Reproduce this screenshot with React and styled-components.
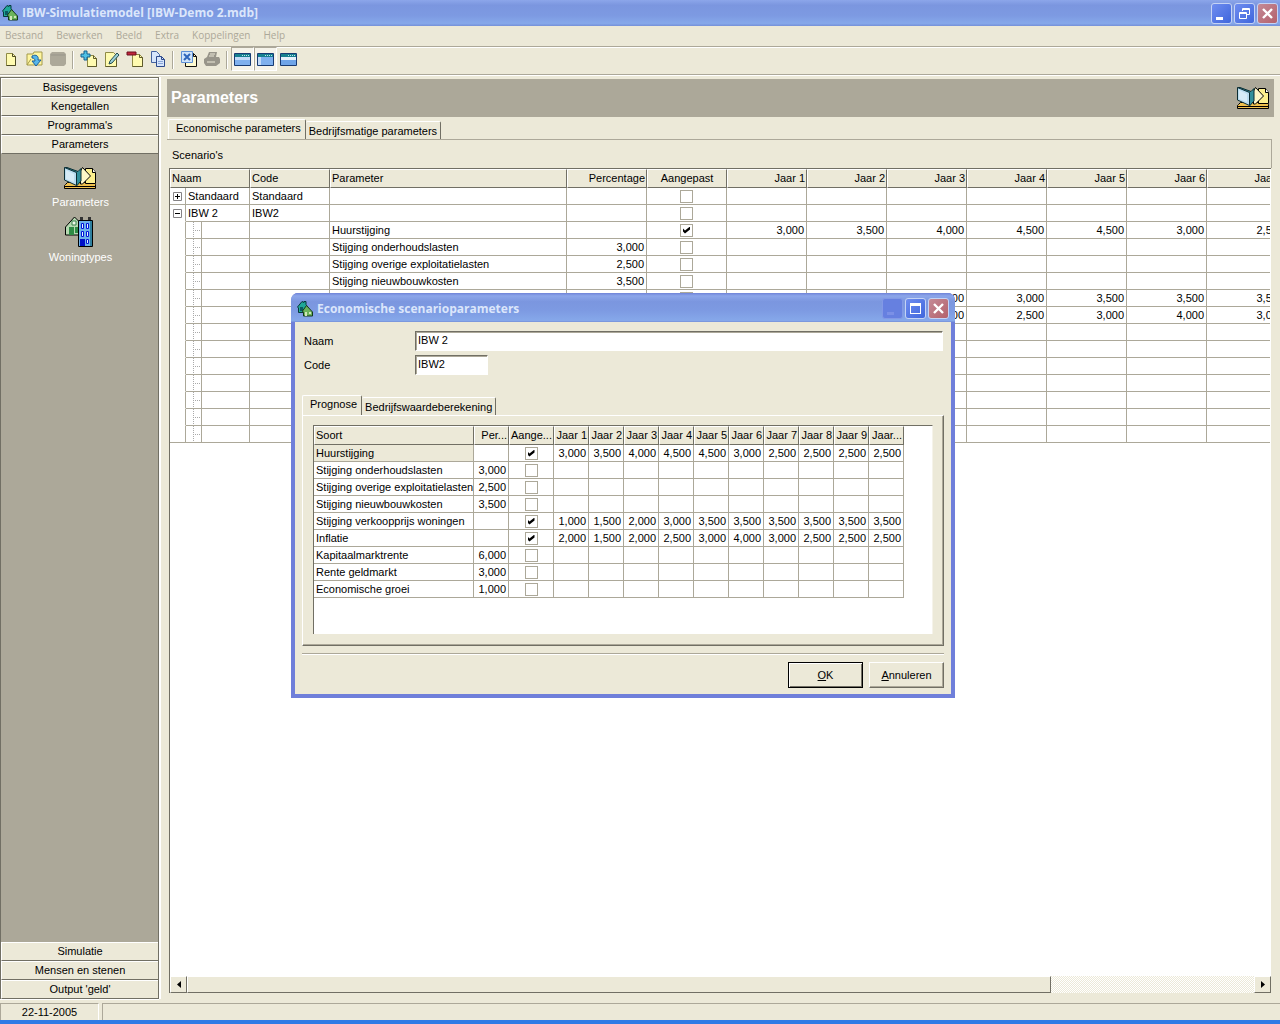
import React from 'react';
import styled, { createGlobalStyle, css } from 'styled-components';

const face = '#ece9d8';
const shade = '#aca899';
const dark = '#716f64';

const YEARS = [1, 2, 3, 4, 5, 6, 7, 8, 9];

const PARAMETERS = [
  { name: 'Huurstijging', years: ['3,000', '3,500', '4,000', '4,500', '4,500', '3,000', '2,500', '2,500', '2,500', '2,500'] },
  { name: 'Stijging onderhoudslasten', percentage: '3,000' },
  { name: 'Stijging overige exploitatielasten', percentage: '2,500' },
  { name: 'Stijging nieuwbouwkosten', percentage: '3,500' },
  { name: 'Stijging verkoopprijs woningen', years: ['1,000', '1,500', '2,000', '3,000', '3,500', '3,500', '3,500', '3,500', '3,500', '3,500'] },
  { name: 'Inflatie', years: ['2,000', '1,500', '2,000', '2,500', '3,000', '4,000', '3,000', '2,500', '2,500', '2,500'] },
  { name: 'Kapitaalmarktrente', percentage: '6,000' },
  { name: 'Rente geldmarkt', percentage: '3,000' },
  { name: 'Economische groei', percentage: '1,000' },
];

const EMPTY_ROWS = [1, 2, 3, 4];

/* Icons */

const HouseIcon = () => (
  <svg width="16" height="16" viewBox="0 0 16 16" aria-hidden="true">
    <path d="M.5 6L5 .5l2 1V.500h2v3l2 3v5H1.500V7z" fill="#1fa898" stroke="#06383a" />
    <path d="M3 6h3v4H3z" fill="#0b5a62" />
    <path d="M5.500 10l4-5.500 6 6.500v4h-9v-3z" fill="#6cb45c" stroke="#14381c" />
    <path d="M8 11h2v4H8zM12 11h2v2h-2z" fill="#cfe6b8" />
  </svg>
);

const BooksIcon = () => (
  <svg width="33" height="24" viewBox="0 0 33 24" aria-hidden="true">
    <path d="M1.500 18.500l2-2h26l2 2v4h-31v-3z" fill="#f0c04e" stroke="#000" />
    <path d="M1 20.500h31" stroke="#000" />
    <path d="M21.500 2.500h7l3 4v11h-10z" fill="#fdf08e" stroke="#000" />
    <path d="M28.500 2.500v4h3" fill="#fff" stroke="#000" />
    <path d="M18.500 1.500l8 8.500-8 8h-2V5z" fill="#fdf7c8" stroke="#000" />
    <path d="M1 1.500h2l11 4 3-3V15l-4 4.500z" fill="#32909c" stroke="#0b2d33" />
    <path d="M.5 1.500l12 5v13L.5 14z" fill="#b9dcef" stroke="#0b2d33" />
    <path d="M2 4l8 4v8l-8-3z" fill="#d6ebf6" />
  </svg>
);

const BuildingsIcon = () => (
  <svg width="32" height="34" viewBox="0 0 32 34" aria-hidden="true">
    <path d="M1.500 12L10.500 2l9 9v9h-18z" fill="#b5d9b1" stroke="#000" />
    <path d="M8 6h4v4H8z" fill="#eff8ea" stroke="#37804a" />
    <path d="M5 12h5v8H5zM11 12h3v6h-3z" fill="#2e8b45" />
    <path d="M16 2h3v3h-3zM24 2h3v3h-3z" fill="#333" />
    <path d="M14.500 5.500h14v26h-14z" fill="#6cb0ea" stroke="#000" />
    <path d="M26 6h2v25h-2z" fill="#2f7f9e" />
    <path d="M17.500 8.500h2v5h-2zM22.500 8.500h2v5h-2zM17.500 16.500h2v5h-2zM22.500 16.500h2v5h-2zM22.500 24.500h2v4h-2z" fill="#e9f4ff" stroke="#0014d8" />
    <path d="M16 24h5v7h-5z" fill="#0010c8" />
  </svg>
);

const NewIcon = () => (
  <svg width="16" height="16" viewBox="0 0 16 16" aria-hidden="true">
    <path d="M2.500 2.500h6l3 3v9h-9z" fill="#fffbb0" stroke="#8f8a45" />
    <path d="M8.500 2.500v3h3v9h-9" fill="none" stroke="#4d4a25" />
  </svg>
);

const OpenIcon = () => (
  <svg width="18" height="16" viewBox="0 0 18 16" aria-hidden="true">
    <path d="M1 3h6l1-2h8v13H1z" fill="#fff6a0" stroke="#a49a4a" />
    <path d="M6 5c4-2 7 0 6 4h3l-5 6-4-5h3c0-2-1-3-3-3z" fill="#58b7ea" stroke="#1a5f9e" />
    <path d="M1 14l4-6" stroke="#a49a4a" />
  </svg>
);

const DatabaseIcon = () => (
  <svg width="18" height="16" viewBox="0 0 18 16" aria-hidden="true">
    <path d="M1 3l2-2h12l2 2v10l-2 2H3l-2-2z" fill={shade} />
    <path d="M2 4h14" stroke="#98958a" />
  </svg>
);

const AddIcon = () => (
  <svg width="18" height="18" viewBox="0 0 18 18" aria-hidden="true">
    <path d="M7.500 5.500h6l3 3v8h-9z" fill="#fffbb0" stroke="#8f8a45" />
    <path d="M13.500 5.500v3h3v8h-9" fill="none" stroke="#5e5a2b" />
    <path d="M4 1h3v3h3v3H7v3H4V7H1V4h3z" fill="#4fc1e4" stroke="#14608f" />
  </svg>
);

const EditIcon = () => (
  <svg width="18" height="18" viewBox="0 0 18 18" aria-hidden="true">
    <path d="M2.500 2.500h8l3 3v11h-11z" fill="#fffbb0" stroke="#8f8a45" />
    <path d="M13.500 9v7.500h-11" fill="none" stroke="#5e5a2b" />
    <path d="M14 3l2 2-7 8-3 1 1-3z" fill="#9dd0d6" stroke="#214a50" />
  </svg>
);

const RemoveIcon = () => (
  <svg width="18" height="18" viewBox="0 0 18 18" aria-hidden="true">
    <path d="M6.500 4.500h7l3 3v9h-10z" fill="#fffbb0" stroke="#8f8a45" />
    <path d="M13.500 4.500v3h3v9h-10" fill="none" stroke="#5e5a2b" />
    <path d="M1 2h9v3H1z" fill="#c2263a" stroke="#6b1020" />
  </svg>
);

const CopyIcon = () => (
  <svg width="18" height="18" viewBox="0 0 18 18" aria-hidden="true">
    <path d="M2.500 1.500h5l3 3v8h-8z" fill="#d6e5fb" stroke="#44629f" />
    <path d="M7.500 6.500h5l3 3v7h-8z" fill="#d6e5fb" stroke="#2d4a8c" />
    <path d="M12.500 6.500v3h3" fill="none" stroke="#2d4a8c" />
    <path d="M9 11.500h5M9 13.500h5" stroke="#8ba7da" />
  </svg>
);

const ExcelIcon = () => (
  <svg width="18" height="18" viewBox="0 0 18 18" aria-hidden="true">
    <path d="M5.500 3.500h8l3 3v10h-11z" fill="#fffbd0" stroke="#111" />
    <path d="M13.500 3.500v3h3" fill="none" stroke="#111" />
    <path d="M1.500 1.500h11v11h-11z" fill="#cfe4fb" stroke="#5c8fd6" />
    <path d="M4 4l6 6M10 4l-6 6" stroke="#2f66bb" strokeWidth="2" />
  </svg>
);

const PrintIcon = () => (
  <svg width="18" height="16" viewBox="0 0 18 16" aria-hidden="true">
    <path d="M6 1h8l-1 5h3l1 2v4l-4 3H3l-2-3V8l3-2z" fill="#98958a" />
    <path d="M7 3h5M6 5h5M4 11h8" stroke={face} />
  </svg>
);

const WindowIcon = ({ left, top }) => (
  <svg width="17" height="15" viewBox="0 0 17 15" aria-hidden="true">
    <path d="M.5 1.500h16v12H.5z" fill={top ? '#e6f0fb' : '#7fb0ee'} stroke="#173a73" />
    <path d="M1 2h15v3H1z" fill="#16808f" />
    <path d="M8 3.500h1M10 3.500h1M12 3.500h1M14 3.500h1" stroke="#bfe6ea" />
    {!left && !top && <path d="M1 5h15v3H1z" fill="#c4dbf8" />}
    {left && <path d="M1 5h3v8H1z" fill="#c4dbf8" />}
    {top && <path d="M1 8h15v5H1z" fill="#6ea4e8" />}
  </svg>
);

const CaptionGlyph = ({ kind }) => (
  <svg width="19" height="19" viewBox="0 0 19 19" aria-hidden="true">
    {kind === 'minimize' && <path d="M4 13h7v3H4z" fill="currentColor" />}
    {kind === 'maximize' && <path d="M4 4h11v11H4zM5 7v7h9V7z" fill="currentColor" fillRule="evenodd" />}
    {kind === 'restore' && (
      <g fill="none" stroke="currentColor">
        <path d="M7.500 7V4.500h7v6H12M7 5.500h8" />
        <path d="M4.500 8.500h7v6h-7zM4 9.500h8" />
      </g>
    )}
    {kind === 'close' && <path d="M5 5l9 9M14 5l-9 9" stroke="currentColor" strokeWidth="2.400" />}
  </svg>
);

const ExpandGlyph = ({ open }) => (
  <svg width="9" height="9" viewBox="0 0 9 9" aria-hidden="true">
    <path d="M.5.5h8v8h-8z" fill="#fff" stroke="#848284" />
    <path d={open ? 'M2 4.500h5' : 'M2 4.500h5M4.500 2v5'} stroke="#000" />
  </svg>
);

const Arrow = ({ right }) => (
  <svg width="4" height="7" viewBox="0 0 4 7" aria-hidden="true">
    <path d={right ? 'M0 0v7l4-3.500z' : 'M4 0v7L0 3.500z'} fill="#000" />
  </svg>
);

const Caption = ({ kind, label, muted }) => (
  <CaptionButton type="button" aria-label={label} $close={kind === 'close'} $muted={muted}>
    <CaptionGlyph kind={kind} />
  </CaptionButton>
);

const Tool = ({ label, pressed, children }) => (
  <ToolButton type="button" aria-label={label} $pressed={pressed}>
    {children}
  </ToolButton>
);

const ScenarioGrid = () => (
  <Grid $width={957}>
    <colgroup>
      <Column $width={16} />
      <Column $width={16} />
      <Column $width={48} />
      <Column $width={80} />
      <Column $width={237} />
      <Column $width={80} />
      <Column $width={80} />
      {YEARS.slice(0, 7).map((year) => (
        <Column key={year} $width={80} />
      ))}
    </colgroup>
    <thead>
      <tr>
        <HeadCell colSpan={3}>Naam</HeadCell>
        <HeadCell>Code</HeadCell>
        <HeadCell>Parameter</HeadCell>
        <HeadCell $align="right">Percentage</HeadCell>
        <HeadCell $align="center">Aangepast</HeadCell>
        {YEARS.slice(0, 7).map((year) => (
          <HeadCell key={year} $align="right">{`Jaar ${year}`}</HeadCell>
        ))}
      </tr>
    </thead>
    <tbody>
      <tr>
        <TreeCell>
          <Expander type="button" aria-label="Standaard uitklappen"><ExpandGlyph /></Expander>
        </TreeCell>
        <Cell colSpan={2}>Standaard</Cell>
        <Cell>Standaard</Cell>
        <Cell />
        <Cell />
        <Cell $align="center"><Check type="checkbox" aria-label="Standaard aangepast" /></Cell>
        {YEARS.slice(0, 7).map((year) => <Cell key={year} />)}
      </tr>
      <tr>
        <TreeCell $open>
          <Expander type="button" aria-label="IBW 2 inklappen"><ExpandGlyph open /></Expander>
        </TreeCell>
        <Cell colSpan={2}>IBW 2</Cell>
        <Cell>IBW2</Cell>
        <Cell />
        <Cell />
        <Cell $align="center"><Check type="checkbox" aria-label="IBW 2 aangepast" /></Cell>
        {YEARS.slice(0, 7).map((year) => <Cell key={year} />)}
      </tr>
      {PARAMETERS.map((item) => (
        <tr key={item.name}>
          <TreeCell $open />
          <Cell $branch />
          <Cell />
          <Cell />
          <Cell>{item.name}</Cell>
          <Cell $align="right">{item.percentage}</Cell>
          <Cell $align="center">
            <Check type="checkbox" aria-label={`${item.name} aangepast`} defaultChecked={!!item.years} />
          </Cell>
          {YEARS.slice(0, 7).map((year) => (
            <Cell key={year} $align="right">{item.years && item.years[year - 1]}</Cell>
          ))}
        </tr>
      ))}
      {EMPTY_ROWS.map((row) => (
        <tr key={row}>
          <TreeCell $open={row < EMPTY_ROWS.length} />
          <Cell $branch />
          <Cell />
          <Cell />
          <Cell />
          <Cell />
          <Cell />
          {YEARS.slice(0, 7).map((year) => <Cell key={year} />)}
        </tr>
      ))}
    </tbody>
  </Grid>
);

const PrognoseGrid = () => (
  <Grid $width={590}>
    <colgroup>
      <Column $width={160} />
      <Column $width={35} />
      <Column $width={45} />
      {[...YEARS, 10].map((year) => (
        <Column key={year} $width={35} />
      ))}
    </colgroup>
    <thead>
      <tr>
        <HeadCell>Soort</HeadCell>
        <HeadCell $align="right">Per...</HeadCell>
        <HeadCell>Aange...</HeadCell>
        {YEARS.map((year) => (
          <HeadCell key={year} $align="right">{`Jaar ${year}`}</HeadCell>
        ))}
        <HeadCell $align="right">Jaar...</HeadCell>
      </tr>
    </thead>
    <tbody>
      {PARAMETERS.map((item, index) => (
        <tr key={item.name}>
          <Cell $selected={index === 0}>{item.name}</Cell>
          <Cell $align="right">{item.percentage}</Cell>
          <Cell $align="center">
            <Check type="checkbox" aria-label={item.name} defaultChecked={!!item.years} />
          </Cell>
          {[...YEARS, 10].map((year) => (
            <Cell key={year} $align="right">{item.years && item.years[year - 1]}</Cell>
          ))}
        </tr>
      ))}
    </tbody>
  </Grid>
);

const ScenarioDialog = () => (
  <Dialog role="dialog" aria-labelledby="dialog-title">
    <DialogTitleBar>
      <HouseIcon />
      <Title as="h2" id="dialog-title">Economische scenarioparameters</Title>
      <Caption kind="minimize" label="Minimaliseren" muted />
      <Caption kind="maximize" label="Maximaliseren" />
      <Caption kind="close" label="Sluiten" />
    </DialogTitleBar>
    <DialogBody>
      <Fields>
        <label htmlFor="naam">Naam</label>
        <TextBox id="naam" defaultValue="IBW 2" />
        <label htmlFor="code">Code</label>
        <TextBox id="code" defaultValue="IBW2" $short />
      </Fields>
      <TabStrip>
        <Tab type="button" $active>Prognose</Tab>
        <Tab type="button">Bedrijfswaardeberekening</Tab>
      </TabStrip>
      <DialogPage>
        <GridFrame $dialog>
          <PrognoseGrid />
        </GridFrame>
      </DialogPage>
      <Divider />
      <DialogActions>
        <PushButton type="submit" $default><u>O</u>K</PushButton>
        <PushButton type="button"><u>A</u>nnuleren</PushButton>
      </DialogActions>
    </DialogBody>
  </Dialog>
);

const App = () => (
  <Window>
    <GlobalStyle />
    <TitleBar>
      <HouseIcon />
      <Title>IBW-Simulatiemodel [IBW-Demo 2.mdb]</Title>
      <Caption kind="minimize" label="Minimaliseren" />
      <Caption kind="restore" label="Herstellen" />
      <Caption kind="close" label="Sluiten" />
    </TitleBar>
    <MenuBar>
      {['Bestand', 'Bewerken', 'Beeld', 'Extra', 'Koppelingen', 'Help'].map((item) => (
        <MenuItem key={item} type="button">{item}</MenuItem>
      ))}
    </MenuBar>
    <Toolbar>
      <Tool label="Nieuw"><NewIcon /></Tool>
      <Tool label="Openen"><OpenIcon /></Tool>
      <Tool label="Database"><DatabaseIcon /></Tool>
      <ToolSeparator />
      <Tool label="Toevoegen"><AddIcon /></Tool>
      <Tool label="Wijzigen"><EditIcon /></Tool>
      <Tool label="Verwijderen"><RemoveIcon /></Tool>
      <Tool label="Kopiëren"><CopyIcon /></Tool>
      <ToolSeparator />
      <Tool label="Excel"><ExcelIcon /></Tool>
      <Tool label="Afdrukken"><PrintIcon /></Tool>
      <ToolSeparator />
      <Tool label="Venster" pressed><WindowIcon /></Tool>
      <Tool label="Navigatie" pressed><WindowIcon left /></Tool>
      <Tool label="Details"><WindowIcon top /></Tool>
    </Toolbar>
    <Workspace>
      <Sidebar>
        {['Basisgegevens', 'Kengetallen', "Programma's", 'Parameters'].map((item) => (
          <GroupButton key={item} type="button">{item}</GroupButton>
        ))}
        <Shortcuts>
          <Shortcut type="button"><BooksIcon />Parameters</Shortcut>
          <Shortcut type="button"><BuildingsIcon />Woningtypes</Shortcut>
        </Shortcuts>
        {['Simulatie', 'Mensen en stenen', "Output 'geld'"].map((item) => (
          <GroupButton key={item} type="button">{item}</GroupButton>
        ))}
      </Sidebar>
      <Main>
        <PageHeader>
          <Heading>Parameters</Heading>
          <BooksIcon />
        </PageHeader>
        <TabStrip $page>
          <Tab type="button" $active>Economische parameters</Tab>
          <Tab type="button">Bedrijfsmatige parameters</Tab>
        </TabStrip>
        <PageLabel>Scenario's</PageLabel>
        <GridFrame>
          <GridView>
            <ScenarioGrid />
          </GridView>
          <ScrollBar>
            <ScrollButton type="button" aria-label="Naar links"><Arrow /></ScrollButton>
            <ScrollTrack><ScrollThumb /></ScrollTrack>
            <ScrollButton type="button" aria-label="Naar rechts"><Arrow right /></ScrollButton>
          </ScrollBar>
        </GridFrame>
      </Main>
    </Workspace>
    <StatusBar>
      <StatusCell $date>22-11-2005</StatusCell>
      <StatusCell />
    </StatusBar>
    <ScenarioDialog />
  </Window>
);

const GlobalStyle = createGlobalStyle`
  * {
    box-sizing: border-box;
  }

  body {
    margin: 0;
    background: ${face};
  }

  body, button, input, table {
    font: 11px/13px 'Liberation Sans', Arial, sans-serif;
    color: #000;
  }

  button {
    margin: 0;
    padding: 0;
    border: 0;
    background: none;
  }

  svg {
    display: block;
    flex: none;
  }
`;

const raised = css`
  background: ${face};
  border: 1px solid;
  border-color: #fff ${dark} ${dark} #fff;
`;

const Window = styled.div`
  position: relative;
  display: flex;
  flex-direction: column;
  min-height: 100vh;
  overflow: hidden;
  background: ${face};
  border-bottom: 4px solid #2f7ae5;
`;

const TitleBar = styled.header`
  display: flex;
  align-items: center;
  gap: 2px;
  height: 26px;
  padding: 0 2px;
  background: linear-gradient(#8ca6ea, #7b96df 20%, #7d9ae2 60%, #86a8ea 90%, #7590d8);
`;

const Title = styled.h1`
  flex: 1;
  margin: 0;
  padding-left: 2px;
  color: #dbe6fb;
  font: bold 12px/16px 'Open Sans', sans-serif;
`;

const CaptionButton = styled.button`
  width: 21px;
  height: 21px;
  border: 1px solid #c5d3f5;
  border-radius: 3px;
  color: #fff;
  background: linear-gradient(135deg, #6f8df0, #3f66dc);

  ${(props) => props.$close && css`
    background: linear-gradient(135deg, #c48a96, #b4616c);
  `}

  ${(props) => props.$muted && css`
    border-color: #8399e6;
    color: #7b90e6;
    background: #6680e0;
  `}
`;

const MenuBar = styled.nav`
  display: flex;
  align-items: flex-start;
  gap: 13px;
  height: 20px;
  padding: 0 5px;
`;

const MenuItem = styled.button`
  color: ${shade};
  font: 10px/18px 'Open Sans', sans-serif;
`;

const Toolbar = styled.div`
  display: flex;
  height: 30px;
  border-top: 1px solid ${shade};
  border-bottom: 1px solid #fff;
  box-shadow: inset 0 1px #fff, inset 0 -1px ${shade};
`;

const ToolButton = styled.button`
  display: flex;
  align-items: center;
  justify-content: center;
  width: 23px;
  height: 24px;
  border: 1px solid transparent;

  ${(props) => props.$pressed && css`
    background: #f5f3ea;
    border-color: ${shade} #fff #fff ${shade};
  `}
`;

const ToolSeparator = styled.span`
  width: 2px;
  height: 18px;
  margin: 4px 3px;
  border-left: 1px solid ${shade};
  border-right: 1px solid #fff;
`;

const Workspace = styled.div`
  display: flex;
  flex: 1;
  min-height: 0;
`;

const Sidebar = styled.aside`
  display: flex;
  flex-direction: column;
  flex: none;
  width: 159px;
  margin: 1px 0 4px;
  border: 1px solid ${dark};
  border-bottom: 0;
  background: ${shade};
  box-shadow: 1px 0 #fff, 2px 0 #fff, 0 1px #fff;
`;

const GroupButton = styled.button`
  height: 19px;
  background: ${face};
  border-top: 1px solid #fff;
  border-left: 1px solid #fff;
  border-bottom: 1px solid ${dark};
`;

const Shortcuts = styled.div`
  display: flex;
  flex-direction: column;
  align-items: center;
  gap: 6px;
  flex: 1;
  padding: 12px 0 0 2px;
`;

const Shortcut = styled.button`
  display: flex;
  flex-direction: column;
  align-items: center;
  gap: 6px;
  color: #fff;

  & + & {
    gap: 2px;
  }
`;

const Main = styled.main`
  display: flex;
  flex-direction: column;
  flex: 1;
  min-width: 0;
  padding: 3px 6px 10px 8px;
`;

const PageHeader = styled.div`
  display: flex;
  align-items: center;
  justify-content: space-between;
  height: 38px;
  padding: 0 4px;
  background: ${shade};
`;

const Heading = styled.h2`
  margin: 0;
  color: #fff;
  font: bold 16px/20px 'Liberation Sans', Arial, sans-serif;
`;

const TabStrip = styled.div`
  display: flex;
  align-items: flex-end;
  height: 22px;

  ${(props) => props.$page && css`
    padding-left: 1px;
  `}
`;

const Tab = styled.button`
  height: 18px;
  padding: 1px 3px 0;
  border-top: 1px solid #fff;
  border-right: 1px solid ${dark};
  border-radius: 2px 2px 0 0;
  background: ${face};
  white-space: nowrap;

  ${(props) => props.$active && css`
    height: 20px;
    padding: 0 4px 2px 7px;
    border-left: 1px solid #fff;
  `}
`;

const PageLabel = styled.div`
  height: 29px;
  margin-right: 2px;
  padding: 9px 5px 0;
  border-top: 1px solid ${shade};
  border-right: 1px solid ${shade};
`;

const GridFrame = styled.div`
  display: flex;
  flex-direction: column;
  flex: 1;
  min-height: 0;
  margin: 0 3px 0 2px;
  background: #fff;
  border-top: 1px solid ${dark};
  border-left: 1px solid ${dark};

  ${(props) => props.$dialog && css`
    min-height: 209px;
    margin: 0;
    border-right: 1px solid #f5f3ea;
  `}
`;

const GridView = styled.div`
  flex: 1;
  min-height: 0;
  overflow: hidden;
  border-right: 1px solid #fff;
`;

const Grid = styled.table`
  width: ${(props) => props.$width}px;
  table-layout: fixed;
  border-collapse: separate;
  border-spacing: 0;
`;

const Column = styled.col`
  width: ${(props) => props.$width}px;
`;

const HeadCell = styled.th`
  height: 19px;
  padding: 0 1px;
  border: 1px solid;
  border-color: #fff ${dark} ${dark} #fff;
  background: ${face};
  font-weight: normal;
  text-align: ${(props) => props.$align || 'left'};
  white-space: nowrap;
  overflow: hidden;
`;

const Cell = styled.td`
  height: 17px;
  padding: 0 0 0 2px;
  border-right: 1px solid ${shade};
  border-bottom: 1px solid ${shade};
  text-align: ${(props) => props.$align || 'left'};
  white-space: nowrap;
  overflow: hidden;

  ${(props) => props.$align && css`
    padding: 0 2px;
  `}

  ${(props) => props.$selected && css`
    background: ${face};
  `}

  ${(props) => props.$branch && css`
    background:
      repeating-linear-gradient(#aaa 0 1px, transparent 1px 2px) 7px 0 / 1px 100% no-repeat,
      repeating-linear-gradient(90deg, #aaa 0 1px, transparent 1px 2px) 7px 8px / 8px 1px no-repeat;
  `}
`;

const TreeCell = styled.td`
  height: 17px;
  padding: 0 3px;
  border-right: 1px solid ${shade};
  border-bottom: 1px solid ${(props) => (props.$open ? 'transparent' : shade)};
`;

const Expander = styled.button`
  display: block;
`;

const Check = styled.input`
  appearance: none;
  display: block;
  width: 13px;
  height: 13px;
  margin: 0 auto;
  border: 1px solid ${shade};
  background: #fff;

  &:checked::before {
    content: '';
    display: block;
    width: 7px;
    height: 7px;
    margin: 2px;
    background: #000;
    clip-path: polygon(0 28%, 28% 56%, 100% 0, 100% 43%, 28% 100%, 0 71%);
  }
`;

const ScrollBar = styled.div`
  display: flex;
  height: 17px;
`;

const ScrollButton = styled.button`
  ${raised}
  display: flex;
  align-items: center;
  justify-content: center;
  width: 17px;
`;

const ScrollTrack = styled.div`
  flex: 1;
  background: repeating-conic-gradient(#fff 0 25%, ${face} 0 50%) 0 0 / 2px 2px;
`;

const ScrollThumb = styled.div`
  ${raised}
  width: 81%;
  height: 17px;
`;

const StatusBar = styled.footer`
  display: flex;
  gap: 3px;
  height: 17px;
`;

const StatusCell = styled.div`
  flex: 1;
  padding-top: 2px;
  border-top: 1px solid ${shade};
  border-left: 1px solid ${shade};

  ${(props) => props.$date && css`
    flex: none;
    width: 99px;
    border-right: 1px solid #fff;
    text-align: center;
  `}
`;

/* The dialog floats over the main window */
const Dialog = styled.section`
  position: absolute;
  top: 293px;
  left: 291px;
  width: 664px;
  border: 4px solid #6f7fda;
  border-top: 0;
  border-radius: 7px 7px 0 0;
  background: #6f7fda;
`;

const DialogTitleBar = styled.div`
  display: flex;
  align-items: center;
  gap: 2px;
  height: 29px;
  margin: 0 -4px;
  padding: 2px 6px 0;
  border-radius: 7px 7px 0 0;
  background: linear-gradient(#6f83d8, #8ca6ea 10%, #7b96df 30%, #7d9ae2 60%, #86a8ea 95%, #7590d8);
`;

const DialogBody = styled.div`
  padding: 9px 7px 6px;
  background: ${face};
`;

const Fields = styled.div`
  display: grid;
  grid-template-columns: 111px 1fr;
  row-gap: 4px;
  align-items: center;
  padding: 0 1px 0 2px;
  margin-bottom: 18px;
`;

const TextBox = styled.input`
  width: ${(props) => (props.$short ? '73px' : '100%')};
  height: 20px;
  padding: 0 2px 2px;
  border: 1px solid;
  border-color: ${dark} #fff #fff ${dark};
  box-shadow: inset 1px 1px ${shade};
  background: #fff;
  outline: 0;
`;

const DialogPage = styled.div`
  padding: 9px 10px 11px;
  border: 1px solid;
  border-color: #fff ${dark} ${dark} #fff;
  box-shadow: inset -1px -1px ${shade};
`;

const Divider = styled.hr`
  height: 2px;
  margin: 7px 0;
  border: 0;
  border-top: 1px solid ${shade};
  border-bottom: 1px solid #fff;
`;

const DialogActions = styled.div`
  display: flex;
  justify-content: flex-end;
  gap: 6px;
`;

const PushButton = styled.button`
  ${raised}
  width: 75px;
  height: 26px;
  box-shadow: inset -1px -1px ${shade};

  ${(props) => props.$default && css`
    border-color: #000;
    box-shadow: inset 1px 1px #fff, inset -1px -1px ${dark};
  `}
`;

export default App;
